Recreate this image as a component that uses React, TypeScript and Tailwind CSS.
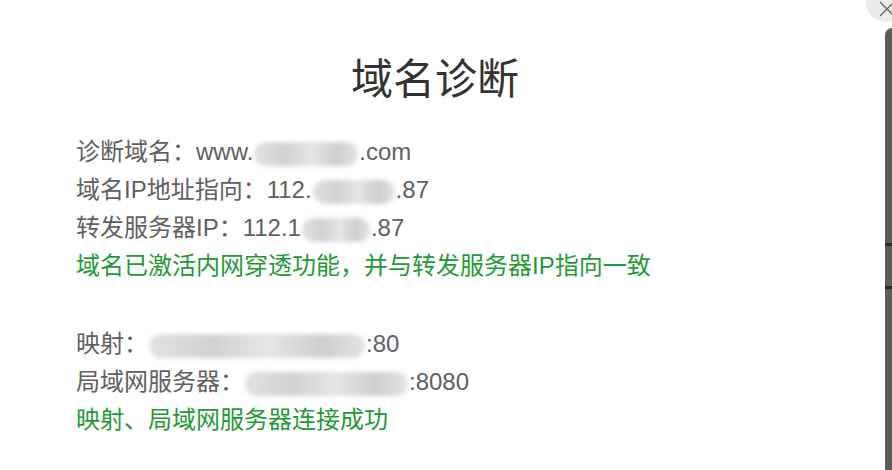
import React from 'react';

const FONT = '"Liberation Sans", "Noto Sans CJK SC", sans-serif';

// smudged redaction block, same as the blurred parts in the screenshot
const Blur = ({ w }: { w: number }) => (
  <span
    className="inline-block align-middle h-[24px] mx-[1px] rounded-full bg-[linear-gradient(90deg,#e2e2e2,#d2d2d2_30%,#e6e6e6_55%,#cfcfcf_80%,#e4e4e4)] blur-[2px]"
    style={{ width: w }}
  />
);

export default function App() {
  return (
    <div className="relative flex w-[892px] h-[470px] overflow-hidden bg-white" style={{ fontFamily: FONT }}>
      <div className="flex-1 bg-white pr-[15px]">
        <h1 className="mt-[55px] text-center text-[42px] leading-[50px] text-[#333]">域名诊断</h1>

        <div className="mt-[28px] pl-[76px] text-[24px] leading-[38px] text-[#606060]">
          <p>
            诊断域名：www.
            <Blur w={104} />
            .com
          </p>
          <p>
            域名IP地址指向：112.
            <Blur w={82} />
            .87
          </p>
          <p>
            转发服务器IP：112.1
            <Blur w={68} />
            .87
          </p>
          <p className="text-[#1f9a35]">域名已激活内网穿透功能，并与转发服务器IP指向一致</p>

          <p className="mt-[40px]">
            映射：
            <Blur w={216} />
            :80
          </p>
          <p>
            局域网服务器：
            <Blur w={163} />
            :8080
          </p>
          <p className="text-[#1f9a35]">映射、局域网服务器连接成功</p>
        </div>
      </div>

      {/* page behind the dialog */}
      <div className="mt-[28px] w-[7px] rounded-tl-[8px] bg-[#5c5c5c] flex flex-col">
        <div className="h-[215px]" />
        <div className="h-[3px] bg-[#2a2a2a]" />
        <div className="h-[40px]" />
        <div className="h-[3px] bg-[#2a2a2a]" />
      </div>

      {/* close button */}
      <button className="absolute left-[866px] top-[-18px] w-[40px] h-[40px] rounded-full bg-[#ececec] flex items-center justify-center">
        <svg width="20" height="20" viewBox="0 0 20 20" className="mt-[14px] ml-[2px]">
          <path d="M3 3 L17 17 M17 3 L3 17" stroke="#666" strokeWidth="1.3" fill="none" />
        </svg>
      </button>
    </div>
  );
}
